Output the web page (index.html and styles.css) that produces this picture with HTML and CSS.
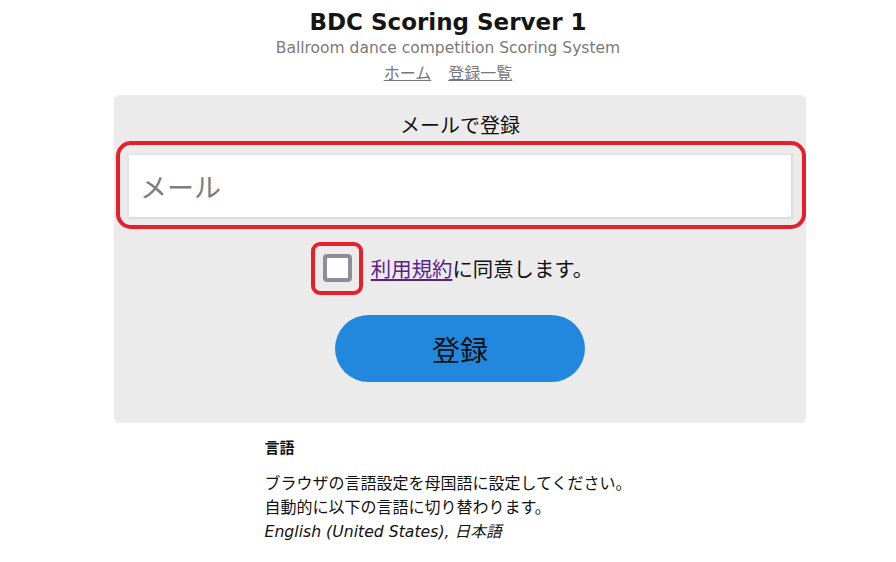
FILE: index.html
```html
<!DOCTYPE html>
<html lang="ja">
<head>
<meta charset="utf-8">
<title>BDC Scoring Server 1</title>
<link rel="stylesheet" href="styles.css">
</head>
<body>
<header class="header">
  <h1 class="title">BDC Scoring Server 1</h1>
  <p class="subtitle">Ballroom dance competition Scoring System</p>
  <nav class="nav">
    <a href="#" class="nav-link">ホーム</a>
    <a href="#" class="nav-link">登録一覧</a>
  </nav>
</header>
<main class="panel">
  <h2 class="panel-title">メールで登録</h2>
  <div class="field">
    <input class="email" type="text" placeholder="メール">
    <span class="mark mark-input"></span>
  </div>
  <label class="agree">
    <span class="check-wrap">
      <span class="check"></span>
      <span class="mark mark-check"></span>
    </span>
    <span class="agree-text"><a href="#" class="terms">利用規約</a>に同意します。</span>
  </label>
  <button class="submit" type="button">登録</button>
</main>
<section class="lang">
  <h3 class="lang-title">言語</h3>
  <p class="lang-text">ブラウザの言語設定を母国語に設定してください。<br>自動的に以下の言語に切り替わります。<br><em class="lang-list">English (United States), 日本語</em></p>
</section>
</body>
</html>
```

FILE: styles.css
```css
* { box-sizing: border-box; }
html, body { margin: 0; padding: 0; background: #fff; }
body {
  font-family: "DejaVu Sans", "Noto Sans CJK JP", sans-serif;
  color: #111;
}
.header {
  display: flex;
  flex-direction: column;
  align-items: center;
}
.title {
  margin: 8px 0 0;
  font-size: 23px;
  line-height: 29px;
  font-weight: bold;
  color: #151515;
}
.subtitle {
  margin: 0;
  font-size: 15.5px;
  line-height: 22px;
  color: #7a7a7a;
}
.nav {
  display: flex;
  gap: 17px;
  margin-top: 2px;
  font-family: "Noto Sans CJK JP", sans-serif;
}
.nav-link {
  font-size: 16px;
  line-height: 22px;
  color: #777;
  text-decoration: underline;
}
.panel {
  margin: 12px 90px 0 114px;
  background: #ebebeb;
  border-radius: 6px;
  padding: 16px 13px 41px;
  display: flex;
  flex-direction: column;
  align-items: center;
  font-family: "Noto Sans CJK JP", sans-serif;
}
.panel-title {
  margin: 0;
  font-size: 20px;
  font-weight: normal;
  line-height: 28px;
  color: #111;
}
.field {
  position: relative;
  width: 100%;
  margin-top: 14px;
}
.email {
  display: block;
  width: 100%;
  height: 66px;
  border: 2px solid #dcdcdc;
  border-top-color: #e4e4e4;
  border-left-color: #e4e4e4;
  background: #fff;
  padding: 0 11px;
  font-family: "Noto Sans CJK JP", sans-serif;
  font-size: 27px;
  color: #222;
  outline: none;
}
.email::placeholder { color: #7d7d7d; }
.mark {
  position: absolute;
  border: 4px solid #e4202c;
  pointer-events: none;
}
.mark-input {
  left: -11px;
  right: -13px;
  top: -12px;
  bottom: -10px;
  border-radius: 15px;
}
.agree {
  display: flex;
  align-items: center;
  margin-top: 35px;
  margin-left: -4px;
  gap: 19px;
}
.check-wrap { position: relative; display: block; }
.check {
  display: block;
  width: 29px;
  height: 28px;
  border: 4px solid #8e8e98;
  border-radius: 4px;
  background: #fff;
}
.mark-check {
  left: -12px;
  right: -11px;
  top: -12px;
  bottom: -13px;
  border-radius: 9px;
}
.agree-text {
  font-size: 20.4px;
  line-height: 28px;
  color: #111;
}
.terms { color: #5b1f8e; text-decoration: underline; }
.submit {
  margin-top: 33px;
  width: 250px;
  height: 67px;
  border: none;
  border-radius: 34px;
  background: #2288dd;
  color: #111;
  font-family: "Noto Sans CJK JP", sans-serif;
  font-size: 28px;
  cursor: pointer;
}
.lang {
  width: fit-content;
  margin: 12px auto 0;
  font-family: "Noto Sans CJK JP", sans-serif;
}
.lang-title {
  margin: 0;
  font-size: 15px;
  line-height: 24px;
  font-weight: bold;
}
.lang-text {
  margin: 11px 0 0;
  font-size: 16px;
  line-height: 24px;
}
.lang-list {
  font-style: italic;
  font-family: "DejaVu Sans", "Noto Sans CJK JP", sans-serif;
  font-size: 15.7px;
}
```
